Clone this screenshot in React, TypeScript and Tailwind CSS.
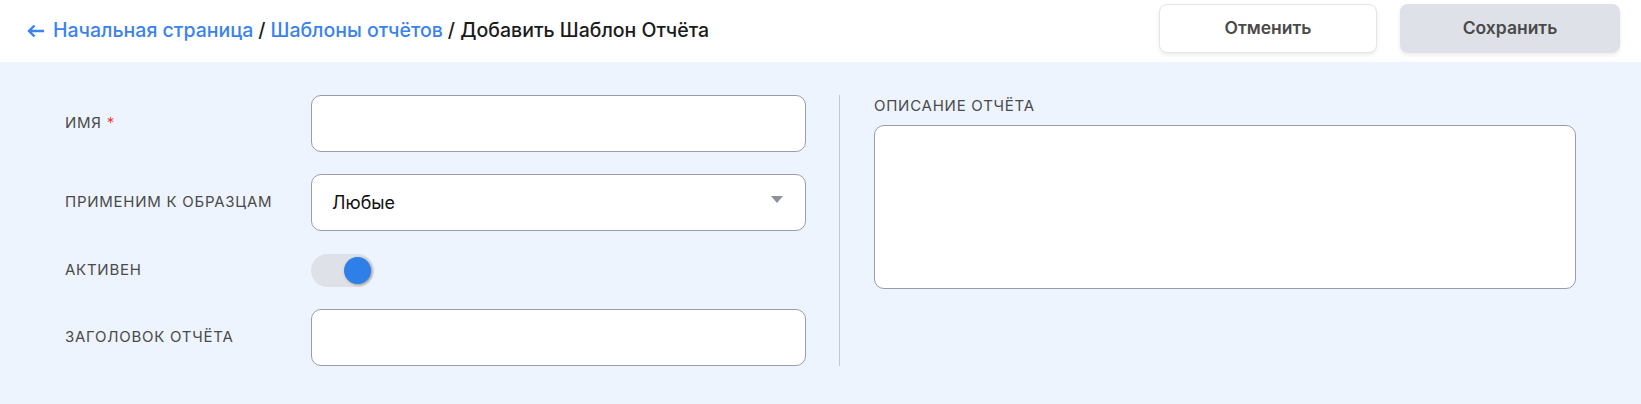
import React, { useState } from 'react';

const labelCls =
  'w-[246px] shrink-0 text-[15px] uppercase tracking-[0.05em] text-[#4a4a4a]';
const inputCls =
  'w-[495px] h-[57px] rounded-[10px] border border-[#9a9cae] bg-white px-5 outline-none';

export default function App() {
  const [active, setActive] = useState(true);

  return (
    <div className="min-h-[404px] w-full bg-[#edf4fe] font-['Inter',sans-serif]">
      {/* Header */}
      <div className="flex h-[62px] items-start justify-between bg-white pl-[27px] pr-[21px]">
        <div className="flex h-full items-center gap-[5px] text-[19.5px] font-medium">
          <svg width="18" height="14" viewBox="0 0 18 14" className="mr-[3px] text-[#3a82ee]">
            <path d="M17 7H2M7.5 1.5L2 7l5.5 5.5" fill="none" stroke="currentColor" strokeWidth="2.4" />
          </svg>
          <a className="text-[#3a82ee]">Начальная страница</a>
          <span className="text-[#1b1b1b]">/</span>
          <a className="text-[#3a82ee]">Шаблоны отчётов</a>
          <span className="text-[#1b1b1b]">/ Добавить Шаблон Отчёта</span>
        </div>
        <div className="flex gap-[23px] pt-[4px]">
          <button className="h-[49px] w-[218px] rounded-[8px] border border-[#e4e6ec] bg-white text-[17.5px] font-semibold text-[#4a4a4a] shadow-[0_2px_4px_rgba(0,0,0,0.08)]">
            Отменить
          </button>
          <button className="h-[49px] w-[220px] rounded-[8px] bg-[#dfe1e8] text-[17.5px] font-semibold text-[#4a4a4a] shadow-[0_2px_4px_rgba(0,0,0,0.08)]">
            Сохранить
          </button>
        </div>
      </div>

      {/* Form */}
      <div className="flex pl-[65px] pt-[33px] pb-[39px]">
        <div className="flex flex-col">
          <div className="flex items-center">
            <label className={labelCls}>
              Имя <span className="text-[#e5483f]">*</span>
            </label>
            <input className={inputCls} />
          </div>
          <div className="mt-[22px] flex items-center">
            <label className={labelCls}>Применим к образцам</label>
            <div className="relative">
              <div className={`${inputCls} flex items-center text-[18px] text-[#111]`}>Любые</div>
              <svg
                width="12"
                height="7"
                viewBox="0 0 12 7"
                className="absolute right-[23px] top-[22px]"
              >
                <path d="M0 0h12L6 7z" fill="#8e90a0" />
              </svg>
            </div>
          </div>
          <div className="mt-[23px] flex items-center">
            <label className={labelCls}>Активен</label>
            <button
              onClick={() => setActive(!active)}
              className="relative h-[33px] w-[63px] rounded-full bg-[#dfe1e8]"
            >
              <span
                className={`absolute top-[3px] h-[27px] w-[27px] rounded-full bg-[#2f7fe9] shadow-[1px_1px_3px_rgba(0,0,0,0.35)] ${
                  active ? 'left-[33px]' : 'left-[3px]'
                }`}
              />
            </button>
          </div>
          <div className="mt-[22px] flex items-center">
            <label className={labelCls}>Заголовок отчёта</label>
            <input className={inputCls} />
          </div>
        </div>

        <div className="ml-[33px] w-px bg-[#c5c7d0]" />

        <div className="ml-[34px] flex flex-col">
          <label className="text-[15px] uppercase tracking-[0.05em] text-[#4a4a4a]">
            Описание отчёта
          </label>
          <textarea className="mt-[7px] h-[164px] w-[702px] resize-none rounded-[10px] border border-[#9a9cae] bg-white p-3 outline-none" />
        </div>
      </div>
    </div>
  );
}
